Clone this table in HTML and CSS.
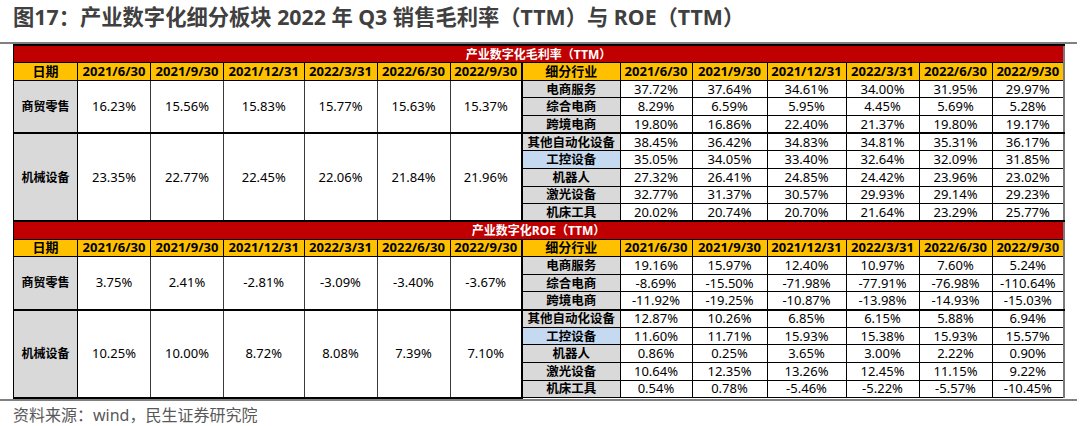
FILE: index.html
```html
<!DOCTYPE html>
<html lang="zh-CN">
<head>
<meta charset="utf-8">
<title>图17</title>
<link rel="stylesheet" href="styles.css">
</head>
<body>
<div class="page">
  <h1 class="title">图17：产业数字化细分板块 2022 年 Q3 销售毛利率（TTM）与 ROE（TTM）</h1>
  <div class="frame">
    <table class="grid">
      <colgroup>
        <col class="w64"><col class="w73"><col class="w73"><col class="w80"><col class="w73"><col class="w73"><col class="w72">
        <col class="w98"><col class="w72"><col class="w75"><col class="w79"><col class="w73"><col class="w73"><col class="w72">
      </colgroup>
      <tbody>
        <tr class="band"><td colspan="14">产业数字化毛利率（TTM）</td></tr>
        <tr class="head">
          <td>日期</td><td>2021/6/30</td><td>2021/9/30</td><td>2021/12/31</td><td>2022/3/31</td><td>2022/6/30</td><td class="split">2022/9/30</td>
          <td>细分行业</td><td>2021/6/30</td><td>2021/9/30</td><td>2021/12/31</td><td>2022/3/31</td><td>2022/6/30</td><td>2022/9/30</td>
        </tr>
        <tr>
          <td class="sector" rowspan="3">商贸零售</td>
          <td class="big" rowspan="3">16.23%</td><td class="big" rowspan="3">15.56%</td><td class="big" rowspan="3">15.83%</td><td class="big" rowspan="3">15.77%</td><td class="big" rowspan="3">15.63%</td><td class="big split" rowspan="3">15.37%</td>
          <td class="sub">电商服务</td><td>37.72%</td><td>37.64%</td><td>34.61%</td><td>34.00%</td><td>31.95%</td><td>29.97%</td>
        </tr>
        <tr><td class="sub">综合电商</td><td>8.29%</td><td>6.59%</td><td>5.95%</td><td>4.45%</td><td>5.69%</td><td>5.28%</td></tr>
        <tr class="groupend"><td class="sub">跨境电商</td><td>19.80%</td><td>16.86%</td><td>22.40%</td><td>21.37%</td><td>19.80%</td><td>19.17%</td></tr>
        <tr>
          <td class="sector" rowspan="5">机械设备</td>
          <td class="big" rowspan="5">23.35%</td><td class="big" rowspan="5">22.77%</td><td class="big" rowspan="5">22.45%</td><td class="big" rowspan="5">22.06%</td><td class="big" rowspan="5">21.84%</td><td class="big split" rowspan="5">21.96%</td>
          <td class="sub">其他自动化设备</td><td>38.45%</td><td>36.42%</td><td>34.83%</td><td>34.81%</td><td>35.31%</td><td>36.17%</td>
        </tr>
        <tr><td class="sub hl">工控设备</td><td>35.05%</td><td>34.05%</td><td>33.40%</td><td>32.64%</td><td>32.09%</td><td>31.85%</td></tr>
        <tr><td class="sub">机器人</td><td>27.32%</td><td>26.41%</td><td>24.85%</td><td>24.42%</td><td>23.96%</td><td>23.02%</td></tr>
        <tr><td class="sub">激光设备</td><td>32.77%</td><td>31.37%</td><td>30.57%</td><td>29.93%</td><td>29.14%</td><td>29.23%</td></tr>
        <tr><td class="sub">机床工具</td><td>20.02%</td><td>20.74%</td><td>20.70%</td><td>21.64%</td><td>23.29%</td><td>25.77%</td></tr>

        <tr class="band"><td colspan="14">产业数字化ROE（TTM）</td></tr>
        <tr class="head">
          <td>日期</td><td>2021/6/30</td><td>2021/9/30</td><td>2021/12/31</td><td>2022/3/31</td><td>2022/6/30</td><td class="split">2022/9/30</td>
          <td>细分行业</td><td>2021/6/30</td><td>2021/9/30</td><td>2021/12/31</td><td>2022/3/31</td><td>2022/6/30</td><td>2022/9/30</td>
        </tr>
        <tr>
          <td class="sector" rowspan="3">商贸零售</td>
          <td class="big" rowspan="3">3.75%</td><td class="big" rowspan="3">2.41%</td><td class="big" rowspan="3">-2.81%</td><td class="big" rowspan="3">-3.09%</td><td class="big" rowspan="3">-3.40%</td><td class="big split" rowspan="3">-3.67%</td>
          <td class="sub">电商服务</td><td>19.16%</td><td>15.97%</td><td>12.40%</td><td>10.97%</td><td>7.60%</td><td>5.24%</td>
        </tr>
        <tr><td class="sub">综合电商</td><td>-8.69%</td><td>-15.50%</td><td>-71.98%</td><td>-77.91%</td><td>-76.98%</td><td>-110.64%</td></tr>
        <tr class="groupend"><td class="sub">跨境电商</td><td>-11.92%</td><td>-19.25%</td><td>-10.87%</td><td>-13.98%</td><td>-14.93%</td><td>-15.03%</td></tr>
        <tr>
          <td class="sector" rowspan="5">机械设备</td>
          <td class="big" rowspan="5">10.25%</td><td class="big" rowspan="5">10.00%</td><td class="big" rowspan="5">8.72%</td><td class="big" rowspan="5">8.08%</td><td class="big" rowspan="5">7.39%</td><td class="big split" rowspan="5">7.10%</td>
          <td class="sub">其他自动化设备</td><td>12.87%</td><td>10.26%</td><td>6.85%</td><td>6.15%</td><td>5.88%</td><td>6.94%</td>
        </tr>
        <tr><td class="sub hl">工控设备</td><td>11.60%</td><td>11.71%</td><td>15.93%</td><td>15.38%</td><td>15.93%</td><td>15.57%</td></tr>
        <tr><td class="sub">机器人</td><td>0.86%</td><td>0.25%</td><td>3.65%</td><td>3.00%</td><td>2.22%</td><td>0.90%</td></tr>
        <tr><td class="sub">激光设备</td><td>10.64%</td><td>12.35%</td><td>13.26%</td><td>12.45%</td><td>11.15%</td><td>9.22%</td></tr>
        <tr><td class="sub">机床工具</td><td>0.54%</td><td>0.78%</td><td>-5.46%</td><td>-5.22%</td><td>-5.57%</td><td>-10.45%</td></tr>
      </tbody>
    </table>
  </div>
  <p class="source">资料来源：wind，民生证券研究院</p>
</div>
</body>
</html>
```

FILE: styles.css
```css
html, body {
  margin: 0;
  padding: 0;
  background: #ffffff;
}

body {
  font-family: "Noto Sans", "Noto Sans CJK SC", sans-serif;
  color: #000000;
}

.page {
  width: 1080px;
}

.title {
  margin: 0;
  height: 42px;
  padding: 0 0 0 13px;
  box-sizing: border-box;
  font-size: 21.3px;
  line-height: 34px;
  font-weight: 700;
  color: #404040;
  white-space: nowrap;
}

.frame {
  width: 1077px;
  border-top: 2px solid #808080;
  border-bottom: 2px solid #808080;
  padding-left: 13px;
  box-sizing: border-box;
}

.grid {
  border-collapse: collapse;
  table-layout: fixed;
  width: 1051px;
  border-right: 2px solid #7a7a7a;
}

.w64 { width: 64px; }
.w72 { width: 72px; }
.w73 { width: 73px; }
.w75 { width: 75px; }
.w79 { width: 79px; }
.w80 { width: 80.5px; }
.w98 { width: 98px; }

.grid tr {
  height: 17.65px;
}

.grid td {
  padding: 0;
  border: 1px solid #000000;
  text-align: center;
  vertical-align: middle;
  font-size: 13px;
  line-height: 15px;
  white-space: nowrap;
  overflow: hidden;
}

.band td {
  background: #c00000;
  color: #ffffff;
  font-size: 12px;
  font-weight: 700;
  border: 1px solid #000000;
  border-top-width: 2px;
}

.head td {
  background: #ffc000;
  font-weight: 700;
  font-size: 13px;
}

.grid td.sector {
  background: #d9d9d9;
  font-weight: 700;
  font-size: 12px;
  border-bottom-width: 2px;
}

.grid td.big {
  border-color: #3a3a3a;
  border-bottom: 2px solid #000000;
}

.grid td.split {
  border-right: 2px solid #000000;
}

.grid td.sub {
  background: #d9d9d9;
  font-weight: 700;
  font-size: 12.5px;
}

.grid td.hl {
  background: #c5d9f1;
}

.groupend td {
  border-bottom-width: 2px;
}

.source {
  margin: 0;
  padding: 4px 0 0 13px;
  font-size: 16px;
  line-height: 20px;
  color: #595959;
}
```
